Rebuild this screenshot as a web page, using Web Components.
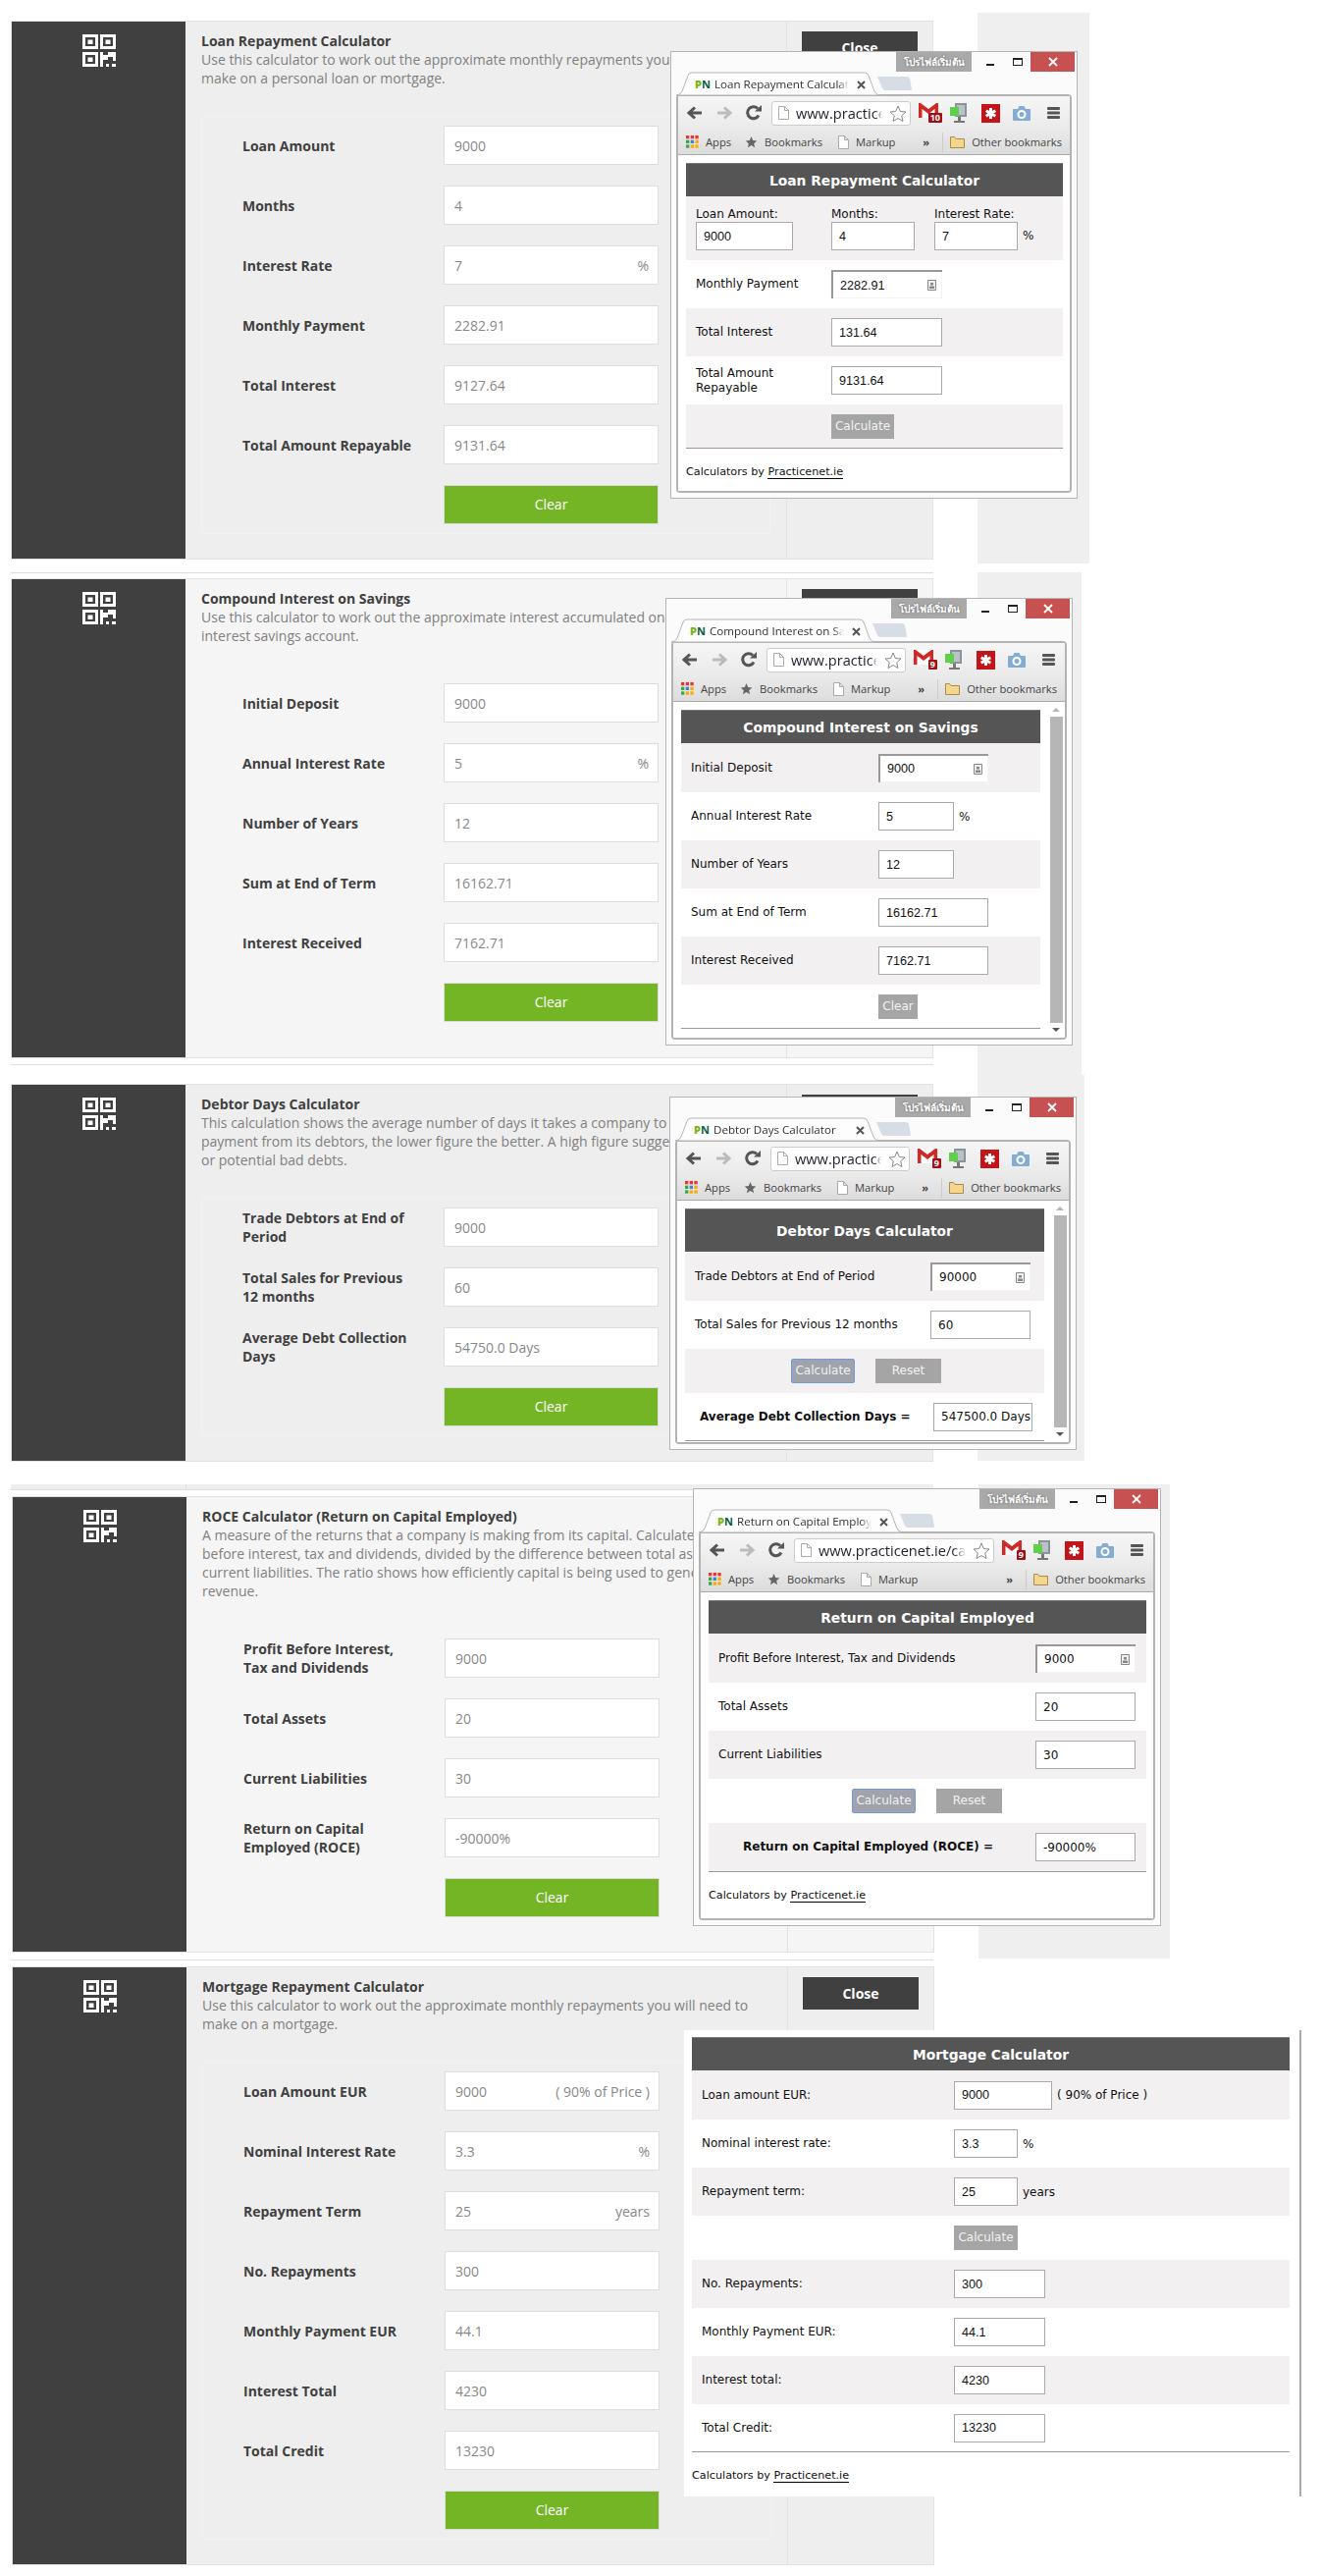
<!doctype html>
<html lang="en">
<head>
<meta charset="utf-8" />
<title>Practicenet calculators</title>
<style>
  html, body { margin: 0; background: #fff; }
  body { width: 1346px; height: 2624px; overflow: hidden; font-family: "Open Sans", sans-serif; }
</style>
</head>
<body>
<calc-panel style="margin-top:21px" heading="Loan Repayment Calculator">
  <span slot="desc">Use this calculator to work out the approximate monthly repayments you<br>make on a personal loan or mortgage.</span>
  <calc-field label="Loan Amount" value="9000"></calc-field>
  <calc-field label="Months" value="4"></calc-field>
  <calc-field label="Interest Rate" value="7" suffix="%"></calc-field>
  <calc-field label="Monthly Payment" value="2282.91"></calc-field>
  <calc-field label="Total Interest" value="9127.64"></calc-field>
  <calc-field label="Total Amount Repayable" value="9131.64"></calc-field>
  <calc-clear></calc-clear>
  <paper-sheet slot="overlay" style="left:985px;top:-8px;width:114px;height:561px"></paper-sheet>
  <chrome-window slot="overlay" style="left:672px;top:31px;width:415px;height:456px" tab="Loan Repayment Calculator" url="www.practicenet.ie/calculators" mail="10">
    <pop-form style="--col:148px;--input-font:'Liberation Sans';--input-size:12.6px">
      <pop-head>Loan Repayment Calculator</pop-head>
      <pop-strip>
        <pop-stack label="Loan Amount:" value="9000" style="width:138px" w="99"></pop-stack>
        <pop-stack label="Months:" value="4" style="width:105px" w="85"></pop-stack>
        <pop-stack label="Interest Rate:" value="7" w="85" suffix="%"></pop-stack>
      </pop-strip>
      <pop-row label="Monthly Payment" value="2282.91" w="113" focus></pop-row>
      <pop-row alt label="Total Interest" value="131.64" w="113"></pop-row>
      <pop-row label="Total Amount Repayable" value="9131.64" w="113" style="--label:100px"></pop-row>
      <pop-row alt tight rule><pop-btn w="64">Calculate</pop-btn></pop-row>
      <pop-foot></pop-foot>
    </pop-form>
  </chrome-window>
</calc-panel>
<panel-edge style="margin-top:13px"></panel-edge>

<calc-panel style="margin-top:5px;--tail:26px;--body:#f5f5f5" heading="Compound Interest on Savings">
  <span slot="desc">Use this calculator to work out the approximate interest accumulated on<br>interest savings account.</span>
  <calc-field label="Initial Deposit" value="9000"></calc-field>
  <calc-field label="Annual Interest Rate" value="5" suffix="%"></calc-field>
  <calc-field label="Number of Years" value="12"></calc-field>
  <calc-field label="Sum at End of Term" value="16162.71"></calc-field>
  <calc-field label="Interest Received" value="7162.71"></calc-field>
  <calc-clear></calc-clear>
  <paper-sheet slot="overlay" style="left:985px;top:-6px;width:106px;height:512px"></paper-sheet>
  <chrome-window slot="overlay" scroll style="left:667px;top:20px;width:415px;height:456px" tab="Compound Interest on Savings" url="www.practicenet.ie/calculators" mail="9">
    <pop-form style="--col:201px;--input-font:'Liberation Sans';--input-size:12.6px">
      <pop-head>Compound Interest on Savings</pop-head>
      <pop-row alt label="Initial Deposit" value="9000" w="112" focus style="height:50px"></pop-row>
      <pop-row label="Annual Interest Rate" value="5" w="77" suffix="%"></pop-row>
      <pop-row alt label="Number of Years" value="12" w="77"></pop-row>
      <pop-row label="Sum at End of Term" value="16162.71" w="112"></pop-row>
      <pop-row alt label="Interest Received" value="7162.71" w="112"></pop-row>
      <pop-row tight rule><pop-btn w="40">Clear</pop-btn></pop-row>
    </pop-form>
  </chrome-window>
</calc-panel>
<panel-edge style="margin-top:6px"></panel-edge>

<calc-panel style="margin-top:19px" heading="Debtor Days Calculator">
  <span slot="desc">This calculation shows the average number of days it takes a company to<br>payment from its debtors, the lower figure the better. A high figure suggests<br>or potential bad debts.</span>
  <calc-field label="Trade Debtors at End of Period" value="9000"></calc-field>
  <calc-field label="Total Sales for Previous 12 months" value="60"></calc-field>
  <calc-field label="Average Debt Collection Days" value="54750.0 Days"></calc-field>
  <calc-clear></calc-clear>
  <paper-sheet slot="overlay" style="left:985px;top:-9px;width:109px;height:393px"></paper-sheet>
  <chrome-window slot="overlay" scroll style="left:671px;top:13px;width:415px;height:360px" tab="Debtor Days Calculator" url="www.practicenet.ie/calculators" mail="9">
    <pop-form style="--col:250px;--head:44px">
      <pop-head>Debtor Days Calculator</pop-head>
      <pop-row alt label="Trade Debtors at End of Period" value="90000" w="102" focus style="height:50px"></pop-row>
      <pop-row label="Total Sales for Previous 12 months" value="60" w="102"></pop-row>
      <pop-row alt tight style="--col:108px"><pop-btn w="65" active>Calculate</pop-btn><pop-btn w="67">Reset</pop-btn></pop-row>
      <pop-row rule strong label="Average Debt Collection Days =" value="547500.0 Days" w="101" style="--col:253px;--pad:15px"></pop-row>
    </pop-form>
  </chrome-window>
</calc-panel>
<panel-edge tall style="margin-top:23px"></panel-edge>

<calc-panel style="margin-top:6px;margin-left:12px;--body:#f5f5f5" heading="ROCE Calculator (Return on Capital Employed)">
  <span slot="desc">A measure of the returns that a company is making from its capital. Calculated<br>before interest, tax and dividends, divided by the difference between total assets<br>current liabilities. The ratio shows how efficiently capital is being used to generate<br>revenue.</span>
  <calc-field label="Profit Before Interest, Tax and Dividends" value="9000"></calc-field>
  <calc-field label="Total Assets" value="20"></calc-field>
  <calc-field label="Current Liabilities" value="30"></calc-field>
  <calc-field label="Return on Capital Employed (ROCE)" value="-90000%"></calc-field>
  <calc-clear></calc-clear>
  <paper-sheet slot="overlay" style="left:985px;top:-12px;width:195px;height:483px"></paper-sheet>
  <chrome-window slot="overlay" style="left:694px;top:-8px;width:477px;height:446px" tab="Return on Capital Employed" url="www.practicenet.ie/calculators" mail="9">
    <pop-form style="--col:333px">
      <pop-head>Return on Capital Employed</pop-head>
      <pop-row alt label="Profit Before Interest, Tax and Dividends" value="9000" w="102" focus style="height:50px"></pop-row>
      <pop-row label="Total Assets" value="20" w="102"></pop-row>
      <pop-row alt label="Current Liabilities" value="30" w="102"></pop-row>
      <pop-row tight style="--col:146px"><pop-btn w="65" active>Calculate</pop-btn><pop-btn w="67">Reset</pop-btn></pop-row>
      <pop-row alt rule strong label="Return on Capital Employed (ROCE) =" value="-90000%" w="102" style="--pad:35px;height:50px"></pop-row>
      <pop-foot></pop-foot>
    </pop-form>
  </chrome-window>
</calc-panel>
<panel-edge style="margin-top:7px"></panel-edge>

<calc-panel style="margin-top:6px;margin-left:12px" heading="Mortgage Repayment Calculator">
  <span slot="desc">Use this calculator to work out the approximate monthly repayments you will need to<br>make on a mortgage.</span>
  <calc-field label="Loan Amount EUR" value="9000" suffix="( 90% of Price )"></calc-field>
  <calc-field label="Nominal Interest Rate" value="3.3" suffix="%"></calc-field>
  <calc-field label="Repayment Term" value="25" suffix="years"></calc-field>
  <calc-field label="No. Repayments" value="300"></calc-field>
  <calc-field label="Monthly Payment EUR" value="44.1"></calc-field>
  <calc-field label="Interest Total" value="4230"></calc-field>
  <calc-field label="Total Credit" value="13230"></calc-field>
  <calc-clear></calc-clear>
  <mortgage-sheet slot="overlay" style="left:685px;top:65px">
    <pop-form style="--col:267px;--input-font:'Liberation Sans';--input-size:12.6px">
      <pop-head>Mortgage Calculator</pop-head>
      <pop-row alt label="Loan amount EUR:" value="9000" w="100" suffix="( 90% of Price )" style="height:50px"></pop-row>
      <pop-row label="Nominal interest rate:" value="3.3" w="65" suffix="%"></pop-row>
      <pop-row alt label="Repayment term:" value="25" w="65" suffix="years"></pop-row>
      <pop-row tight><pop-btn w="65">Calculate</pop-btn></pop-row>
      <pop-row alt label="No. Repayments:" value="300" w="93"></pop-row>
      <pop-row label="Monthly Payment EUR:" value="44.1" w="93"></pop-row>
      <pop-row alt label="Interest total:" value="4230" w="93"></pop-row>
      <pop-row rule label="Total Credit:" value="13230" w="93"></pop-row>
      <pop-foot></pop-foot>
    </pop-form>
  </mortgage-sheet>
</calc-panel>

<script>
const mount = (el, html) => {
  el.attachShadow({ mode: "open" });
  el.shadowRoot.innerHTML = html;
};

const qrIcon = `<svg width="34" height="33" viewBox="0 0 34 33" fill="#fff">
  <path fill-rule="evenodd" d="M0 0h16v15H0zM3 3v9h10V3zM5.5 5.5h5V10h-5zM18 0h16v15H18zM21 3v9h10V3zM23.5 5.5h5V10h-5zM0 18h16v15H0zM3 21v9h10v-9zM5.5 23.5h5V28h-5z"/>
  <path d="M18 18h3v15h-3zM26 18h8v9h-3v-4h-5zM21 21h5v5h-5zM24 30h3v3h-3zM30 30h4v3h-4z"/>
</svg>`;

class CalcPanel extends HTMLElement {
  connectedCallback() {
    mount(this, `<style>
      :host { display: block; position: relative; width: 940px; margin-left: 11px; }
      .box { display: flex; border: 1px solid #e2e2e2; background: var(--body, #eee); }
      .side { width: 177px; flex: none; background: #404040; display: flex; justify-content: center; align-items: flex-start; padding-top: 13px; box-sizing: border-box; }
      .main { width: 612px; flex: none; box-sizing: border-box; padding: 10px 16px var(--tail, 25px); }
      h2 { margin: 0; font: 700 14px/19px "Open Sans", sans-serif; color: #404040; }
      p { margin: 0; font: 400 14px/19px "Open Sans", sans-serif; color: #808080; white-space: nowrap; }
      .form { margin-top: 29px; padding: 9px 0 9px 41px; border: 1px solid rgba(255,255,255,.25); border-radius: 3px; display: flex; flex-direction: column; gap: 21px; }
      .aside { flex: 1; border-left: 1px solid #e2e2e2; padding: 10px 15px; }
      .close { display: block; background: #404040; color: #fff; font: 700 14px/33px "Open Sans", sans-serif; text-align: center; }
    </style>
    <div class="box">
      <div class="side">${qrIcon}</div>
      <div class="main">
        <h2>${this.getAttribute("heading")}</h2>
        <p><slot name="desc"></slot></p>
        <div class="form"><slot></slot></div>
      </div>
      <div class="aside"><span class="close">Close</span></div>
    </div>
    <slot name="overlay"></slot>`);
  }
}

class CalcField extends HTMLElement {
  connectedCallback() {
    const suffix = this.getAttribute("suffix");
    mount(this, `<style>
      :host { display: grid; grid-template-columns: 205px 219px; align-items: center; }
      label { font: 700 14px/19px "Open Sans", sans-serif; color: #404040; max-width: 176px; }
      .input { height: 40px; box-sizing: border-box; border: 1.5px solid #ddd; background: #fff; display: flex; justify-content: space-between; align-items: center; padding: 0 9px 0 10px; font: 400 14px "Open Sans", sans-serif; color: #888; }
    </style>
    <label>${this.getAttribute("label")}</label>
    <div class="input"><span>${this.getAttribute("value")}</span>${suffix ? `<span>${suffix}</span>` : ""}</div>`);
  }
}

class CalcClear extends HTMLElement {
  connectedCallback() {
    mount(this, `<style>
      :host { display: block; margin-left: 205px; width: 219px; }
      div { height: 40px; box-sizing: border-box; border: 1px solid #ddd; background: #74b526; color: #fff; font: 400 14px/38px "Open Sans", sans-serif; text-align: center; }
    </style><div>Clear</div>`);
  }
}

class PanelEdge extends HTMLElement {
  connectedCallback() {
    const tall = this.hasAttribute("tall");
    mount(this, `<style>
      :host { display: block; width: 940px; margin-left: 11px; }
      div { height: ${tall ? 5 : 0}px; border-bottom: 1px solid #ddd; background: #eee; display: flex; }
      i { width: 178px; border-right: 1px solid #ddd; }
    </style><div>${tall ? "<i></i>" : ""}</div>`);
  }
}

class PaperSheet extends HTMLElement {
  connectedCallback() {
    mount(this, `<style>
      :host { display: block; position: absolute; background: #efefef; }
    </style>`);
  }
}

const icons = {
  back: c => `<svg width="16" height="14" viewBox="0 0 16 14"><path d="M15 7H3M8 1.5 2 7l6 5.5" fill="none" stroke="${c}" stroke-width="3"/></svg>`,
  fwd: c => `<svg width="16" height="14" viewBox="0 0 16 14"><path d="M1 7h12M8 1.5 14 7l-6 5.5" fill="none" stroke="${c}" stroke-width="3"/></svg>`,
  reload: `<svg width="16" height="16" viewBox="0 0 16 16"><path d="M13 10.5A6 6 0 1 1 12 3.5" fill="none" stroke="#555" stroke-width="3"/><path d="M9 6.5h7V0z" fill="#555"/></svg>`,
  page: `<svg width="11" height="14" viewBox="0 0 11 14"><path d="M.5.5h6l4 4v9H.5zM6.5.5v4h4" fill="#fff" stroke="#aaa"/></svg>`,
  star: `<svg width="18" height="17" viewBox="0 0 18 17"><path d="M9 1l2.3 5.5 5.7.5-4.3 3.8 1.3 5.7L9 13.5 4 16.500l1.300-5.700L1 7l5.700-.5z" fill="#fff" stroke="#888"/></svg>`,
  mail: `<svg width="20" height="15" viewBox="0 0 20 15"><path d="M0 0h20v15H0z" fill="#cf2a27"/><path d="M3.5 15V6l6.5 5 6.5-5v9zM2 0l8 6 8-6z" fill="#fff"/></svg>`,
  net: `<svg width="17" height="21" viewBox="0 0 17 21"><path d="M5 0h12v14H5z" fill="#8b9298"/><path d="M7 2h8v10H7z" fill="#b8c2c8"/><path d="M0 4h9v9H0z" fill="#5fd04a"/><path d="M8 14h3v4H8zM4 18h11v2H4z" fill="#777"/></svg>`,
  lock: `<svg width="19" height="19" viewBox="0 0 19 19"><path d="M0 0h19v19H0z" fill="#c2151a"/><path d="M9.5 4v11M4.700 6.700l9.600 5.600M14.300 6.700l-9.600 5.600" stroke="#fff" stroke-width="3"/></svg>`,
  camera: `<svg width="18" height="15" viewBox="0 0 18 15"><path d="M1 3h4l1.500-3h5L13 3h4a1 1 0 0 1 1 1v10a1 1 0 0 1-1 1H1a1 1 0 0 1-1-1V4a1 1 0 0 1 1-1z" fill="#85add4"/><circle cx="9" cy="8.5" r="3.5" fill="#85add4" stroke="#fff" stroke-width="2"/></svg>`,
  menu: `<svg width="13" height="12" viewBox="0 0 13 12" fill="#555"><rect width="13" height="3" rx="1"/><rect y="4.5" width="13" height="3" rx="1"/><rect y="9" width="13" height="3" rx="1"/></svg>`,
  apps: `<svg width="13" height="13" viewBox="0 0 13 13">${[["#e33","#e33","#e33"],["#3a4","#38d","#fa0"],["#3a4","#fa0","#fa0"]].map((r, y) => r.map((c, x) => `<rect x="${x * 4.7}" y="${y * 4.7}" width="3.3" height="3.3" fill="${c}"/>`).join("")).join("")}</svg>`,
  mark: `<svg width="13" height="13" viewBox="0 0 18 17"><path d="M9 1l2.3 5.5 5.7.5-4.3 3.8 1.3 5.7L9 13.500 4 16.500l1.300-5.700L1 7l5.700-.5z" fill="#666"/></svg>`,
  folder: `<svg width="15" height="12" viewBox="0 0 15 12"><path d="M.5 11.5v-11h4l1.500 2h8.500v9z" fill="#f6d68c" stroke="#a88a4c"/></svg>`,
};

class ChromeWindow extends HTMLElement {
  connectedCallback() {
    const scroll = this.hasAttribute("scroll");
    mount(this, `<style>
      :host { display: flex; flex-direction: column; position: absolute; box-sizing: border-box; border: 1px solid #b5b5b5; background: #fbfbfb; font: 400 12px "Open Sans", sans-serif; color: #333; }
      .caption { display: flex; justify-content: flex-end; height: 20px; padding-right: 2px; flex: none; }
      .badge { width: 77px; background: #a9a9a9; color: #fff; font: 700 10px/20px "Noto Sans", "DejaVu Sans", sans-serif; text-shadow: 0 0 2px #555; text-align: center; overflow: hidden; white-space: nowrap; }
      .min { width: 8px; height: 2px; background: #222; margin: 12px 19px 0 15px; }
      .max { width: 8px; height: 5px; border: 1px solid #222; border-top-width: 2px; margin: 6px 8px 0 0; }
      .x { width: 45px; background: #c75050; display: flex; align-items: center; justify-content: center; }
      .tabs { position: relative; height: 24px; flex: none; margin-left: 5px; z-index: 1; margin-bottom: -1px; }
      .tabs > svg { position: absolute; left: 0; top: 0; }
      .tab { position: absolute; left: 19px; top: 5px; width: 175px; display: flex; align-items: center; font-size: 11.6px; line-height: 16px; white-space: nowrap; }
      .pn { font-weight: 700; font-size: 11px; width: 20px; flex: none; color: #0c5c43; }
      .pn b { color: #7ab51d; }
      .title { width: 137px; overflow: hidden; -webkit-mask-image: linear-gradient(90deg, #000 92%, transparent); mask-image: linear-gradient(90deg, #000 92%, transparent); }
      .tab svg { margin-left: 8px; flex: none; }
      .frame { flex: 1; min-height: 0; margin: 0 5px 5px; border: 2px solid #b3b3b3; border-radius: 4px; display: flex; flex-direction: column; background: #fff; }
      .tool { height: 34px; flex: none; display: flex; align-items: center; background: linear-gradient(#f6f6f6, #eaeaea); padding-left: 9px; }
      .tool > * { flex: none; }
      .omni { flex: 1; min-width: 0; height: 25px; border: 1px solid #ccc; border-radius: 3px; background: #fff; display: flex; align-items: center; padding: 0 3px 0 6px; margin: 0 8px 0 10px; gap: 7px; box-sizing: border-box; }
      .url { flex: 1; min-width: 0; overflow: hidden; white-space: nowrap; font-size: 14.6px; color: #223; -webkit-mask-image: linear-gradient(90deg, #000 92%, transparent); mask-image: linear-gradient(90deg, #000 92%, transparent); }
      .mail { position: relative; width: 24px; height: 20px; margin-right: 8px; }
      .mail i { position: absolute; right: 0; bottom: 0; background: #a00f14; color: #fff; font: 700 9px/10px "Open Sans", sans-serif; padding: 0 2px; border-radius: 1px; }
      .marks { height: 25px; flex: none; display: flex; align-items: center; background: linear-gradient(#eaeaea, #dcdcdc); border-bottom: 1px solid #aaa; padding-left: 8px; font-size: 11.2px; color: #444; white-space: nowrap; }
      .marks span { display: flex; align-items: center; gap: 7px; margin-right: 14px; }
      .marks .end { margin-left: auto; gap: 7px; margin-right: 8px; }
      .more { font-weight: 700; margin-right: 6px; }
      .sep { width: 1px; height: 20px; background: #ccc; }
      .view { flex: 1; min-height: 0; display: flex; background: #fff; }
      .page { flex: 1; min-width: 0; padding: 8px 7px 0 8px; overflow: hidden; }
      .bar { width: 18px; flex: none; background: #fff; display: flex; flex-direction: column; align-items: center; justify-content: space-between; padding: 6px 0; box-sizing: border-box; }
      .thumb { flex: 1; width: 13px; background: #b6b6b6; margin: 5px 0; }
      .up { border: 4px solid transparent; border-bottom: 4px solid #b6b6b6; border-top: 0; }
      .down { border: 4px solid transparent; border-top: 4px solid #555; border-bottom: 0; }
    </style>
    <div class="caption">
      <div class="badge">โปรไฟล์เริ่มต้น</div>
      <div class="min"></div><div class="max"></div>
      <div class="x"><svg width="10" height="10" viewBox="0 0 10 10"><path d="M1 1l8 8M9 1l-8 8" stroke="#fff" stroke-width="1.8"/></svg></div>
    </div>
    <div class="tabs">
      <svg width="240" height="25" viewBox="0 0 240 25">
        <path d="M205 5h30q2 0 3 2l2 11q0 1-2 1h-25q-2 0-3-2z" fill="#d6dde4"/>
        <path d="M0 24q4 0 6-4l6-16q1-3 4-3h176q3 0 4 3l6 16q2 4 6 4z" fill="#fdfdfd" stroke="#b5b5b5"/>
      </svg>
      <div class="tab">
        <span class="pn"><b>P</b>N</span>
        <span class="title">${this.getAttribute("tab")}</span>
        <svg width="9" height="9" viewBox="0 0 9 9"><path d="M1 1l7 7M8 1L1 8" stroke="#555" stroke-width="2"/></svg>
      </div>
    </div>
    <div class="frame">
      <div class="tool">
        ${icons.back("#555")}<span style="width:14px"></span>${icons.fwd("#bbb")}<span style="width:14px"></span>${icons.reload}
        <div class="omni">${icons.page}<span class="url">${this.getAttribute("url")}</span>${icons.star}</div>
        <div class="mail">${icons.mail}<i>${this.getAttribute("mail")}</i></div>
        ${icons.net}<span style="width:15px"></span>${icons.lock}<span style="width:13px"></span>${icons.camera}<span style="width:17px"></span>${icons.menu}<span style="width:10px"></span>
      </div>
      <div class="marks">
        <span>${icons.apps}Apps</span>
        <span style="margin-right:16px">${icons.mark}Bookmarks</span>
        <span>${icons.page}Markup</span>
        <span class="end"><b class="more">»</b><i class="sep"></i>${icons.folder}Other bookmarks</span>
      </div>
      <div class="view">
        <div class="page"><slot></slot></div>
        ${scroll ? '<div class="bar"><i class="up"></i><i class="thumb"></i><i class="down"></i></div>' : ""}
      </div>
    </div>`);
  }
}

class MortgageSheet extends HTMLElement {
  connectedCallback() {
    mount(this, `<style>
      :host { display: block; position: absolute; width: 629px; height: 475px; box-sizing: border-box; padding: 7px 10px 0 8px; background: #fff; border-right: 2px solid #aaa; font-size: 12px; }
    </style><slot></slot>`);
  }
}

class PopForm extends HTMLElement {
  connectedCallback() {
    mount(this, `<style>
      :host { display: block; font: 400 12px "DejaVu Sans", sans-serif; color: #111; }
    </style><slot></slot>`);
  }
}

class PopHead extends HTMLElement {
  connectedCallback() {
    mount(this, `<style>
      :host { display: flex; align-items: center; justify-content: center; height: var(--head, 34px); box-sizing: border-box; background: #555; border-top: 1px solid #777; color: #fff; font: 700 13.8px "DejaVu Sans", sans-serif; }
    </style><slot></slot>`);
  }
}

const popInput = (value, w, focus) => `<div class="in${focus ? " focus" : ""}" style="width:${w}px"><span>${value}</span>${focus ? `<svg width="9" height="11" viewBox="0 0 9 11"><path d="M.5.5h8v10h-8z" fill="#eee" stroke="#888"/><path d="M3 3h3v2.5H3zM2 6.5h5V9H2z" fill="#888"/></svg>` : ""}</div>`;

const popInputCss = `
  .in { height: 29px; box-sizing: border-box; border: 1px solid #aaa; background: #fff; display: flex; align-items: center; justify-content: space-between; padding: 0 6px 0 7px; overflow: hidden; white-space: nowrap; color: #111; font: 400 var(--input-size, 12px) var(--input-font, "DejaVu Sans"), sans-serif; flex: none; }
  .in.focus { border-width: 2px 0 0 2px; border-color: #999; box-shadow: inset -1px -1px 0 #f3f3f3; }
  .suffix { margin-left: 5px; font-size: 12px; white-space: nowrap; }`;

class PopRow extends HTMLElement {
  connectedCallback() {
    const a = n => this.getAttribute(n);
    const value = a("value");
    mount(this, `<style>
      :host { display: flex; align-items: center; height: 49px; box-sizing: border-box; }
      :host([alt]) { background: #f2f0f1; }
      :host([tight]) { height: 45px; }
      :host([rule]) { border-bottom: 1px solid #999; }
      .label { width: var(--col); flex: none; box-sizing: border-box; padding-left: var(--pad, 10px); }
      .label span { display: block; max-width: var(--label, none); line-height: 15px; }
      :host([strong]) .label { font-weight: 700; }
      ${popInputCss}
    </style>
    <div class="label"><span>${a("label") || ""}</span></div>
    ${value ? popInput(value, a("w"), this.hasAttribute("focus")) : ""}
    ${a("suffix") ? `<span class="suffix">${a("suffix")}</span>` : ""}
    <slot></slot>`);
  }
}

class PopStrip extends HTMLElement {
  connectedCallback() {
    mount(this, `<style>
      :host { display: flex; height: 65px; box-sizing: border-box; padding: 11px 0 0 10px; background: #f2f0f1; }
    </style><slot></slot>`);
  }
}

class PopStack extends HTMLElement {
  connectedCallback() {
    const a = n => this.getAttribute(n);
    mount(this, `<style>
      :host { display: block; font-size: 12px; line-height: 15px; }
      .line { display: flex; align-items: center; }
      ${popInputCss}
    </style>
    <div>${a("label")}</div>
    <div class="line">${popInput(a("value"), a("w"))}${a("suffix") ? `<span class="suffix">${a("suffix")}</span>` : ""}</div>`);
  }
}

class PopBtn extends HTMLElement {
  connectedCallback() {
    const w = this.getAttribute("w");
    mount(this, `<style>
      :host { display: block; width: ${w}px; height: 25px; box-sizing: border-box; margin-right: 21px; background: #a5a5a5; color: #f2f2f2; font: 400 12px/25px "DejaVu Sans", sans-serif; text-align: center; }
      :host([active]) { border: 1px solid #6f9be0; border-radius: 2px; line-height: 23px; background: #a0a3ab; }
    </style><slot></slot>`);
  }
}

class PopFoot extends HTMLElement {
  connectedCallback() {
    mount(this, `<style>
      :host { display: block; padding-top: 16px; font: 400 11.2px/16px "DejaVu Sans", sans-serif; color: #111; white-space: nowrap; }
      a { color: #111; text-decoration: none; border-bottom: 1px solid #000; }
    </style>Calculators by <a>Practicenet.ie</a>`);
  }
}

customElements.define("calc-panel", CalcPanel);
customElements.define("calc-field", CalcField);
customElements.define("calc-clear", CalcClear);
customElements.define("panel-edge", PanelEdge);
customElements.define("paper-sheet", PaperSheet);
customElements.define("chrome-window", ChromeWindow);
customElements.define("mortgage-sheet", MortgageSheet);
customElements.define("pop-form", PopForm);
customElements.define("pop-head", PopHead);
customElements.define("pop-row", PopRow);
customElements.define("pop-strip", PopStrip);
customElements.define("pop-stack", PopStack);
customElements.define("pop-btn", PopBtn);
customElements.define("pop-foot", PopFoot);
</script>
</body>
</html>
